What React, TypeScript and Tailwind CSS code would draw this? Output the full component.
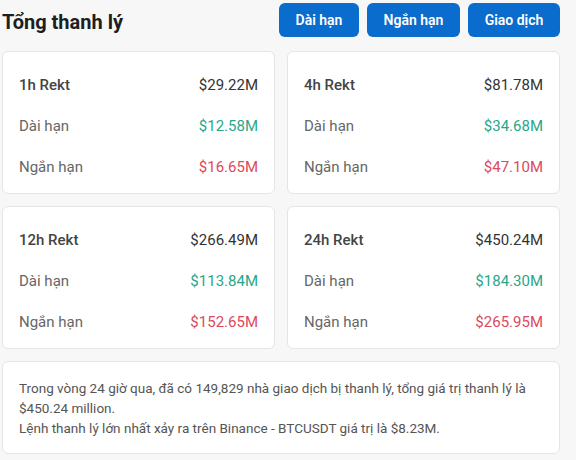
import React from 'react';

interface RektCardProps {
  period: string;
  total: string;
  long: string;
  short: string;
}

function RektCard({ period, total, long, short }: RektCardProps) {
  return (
    <div className="rounded-md border border-[#e5e5e5] bg-white pl-4 pr-4 pt-[13px] pb-[5px]">
      <div className="flex h-[41px] items-center justify-between">
        <span className="font-medium text-[#444444]">{period}</span>
        <span className="text-[#333333]">{total}</span>
      </div>
      <div className="flex h-[41px] items-center justify-between">
        <span className="text-[#666666]">Dài hạn</span>
        <span className="text-[#27a78a]">{long}</span>
      </div>
      <div className="flex h-[41px] items-center justify-between">
        <span className="text-[#666666]">Ngắn hạn</span>
        <span className="text-[#dc4a5c]">{short}</span>
      </div>
    </div>
  );
}

const cards: RektCardProps[] = [
  { period: '1h Rekt', total: '$29.22M', long: '$12.58M', short: '$16.65M' },
  { period: '4h Rekt', total: '$81.78M', long: '$34.68M', short: '$47.10M' },
  { period: '12h Rekt', total: '$266.49M', long: '$113.84M', short: '$152.65M' },
  { period: '24h Rekt', total: '$450.24M', long: '$184.30M', short: '$265.95M' },
];

export default function App() {
  return (
    <div className="min-h-[460px] w-[576px] bg-[#f7f7f7] font-['Roboto',sans-serif] text-[15px]">
      <div className="ml-[2px] w-[558px]">
        <div className="flex h-[51px] items-start justify-between pt-[3px]">
          <h1 className="pt-[4px] text-[20px] font-bold text-[#1e1e1e]">Tổng thanh lý</h1>
          <div className="flex gap-2">
            <button className="h-[34px] w-[80px] rounded-md bg-[#0a6ccc] text-[14px] font-semibold text-white">Dài hạn</button>
            <button className="h-[34px] w-[93px] rounded-md bg-[#0a6ccc] text-[14px] font-semibold text-white">Ngắn hạn</button>
            <button className="h-[34px] w-[92px] rounded-md bg-[#0a6ccc] text-[14px] font-semibold text-white">Giao dịch</button>
          </div>
        </div>
        <div className="grid grid-cols-2 gap-x-3 gap-y-[12px]">
          {cards.map((c) => (
            <RektCard key={c.period} {...c} />
          ))}
        </div>
        <div className="mt-3 rounded-md border border-[#e5e5e5] bg-white px-4 pt-[16px] pb-[15px] text-[13.5px] leading-[20px] text-[#555555]">
          <p>
            Trong vòng 24 giờ qua, đã có 149,829 nhà giao dịch bị thanh lý, tổng giá trị thanh lý là
            $450.24 million.
          </p>
          <p>Lệnh thanh lý lớn nhất xảy ra trên Binance - BTCUSDT giá trị là $8.23M.</p>
        </div>
      </div>
    </div>
  );
}
